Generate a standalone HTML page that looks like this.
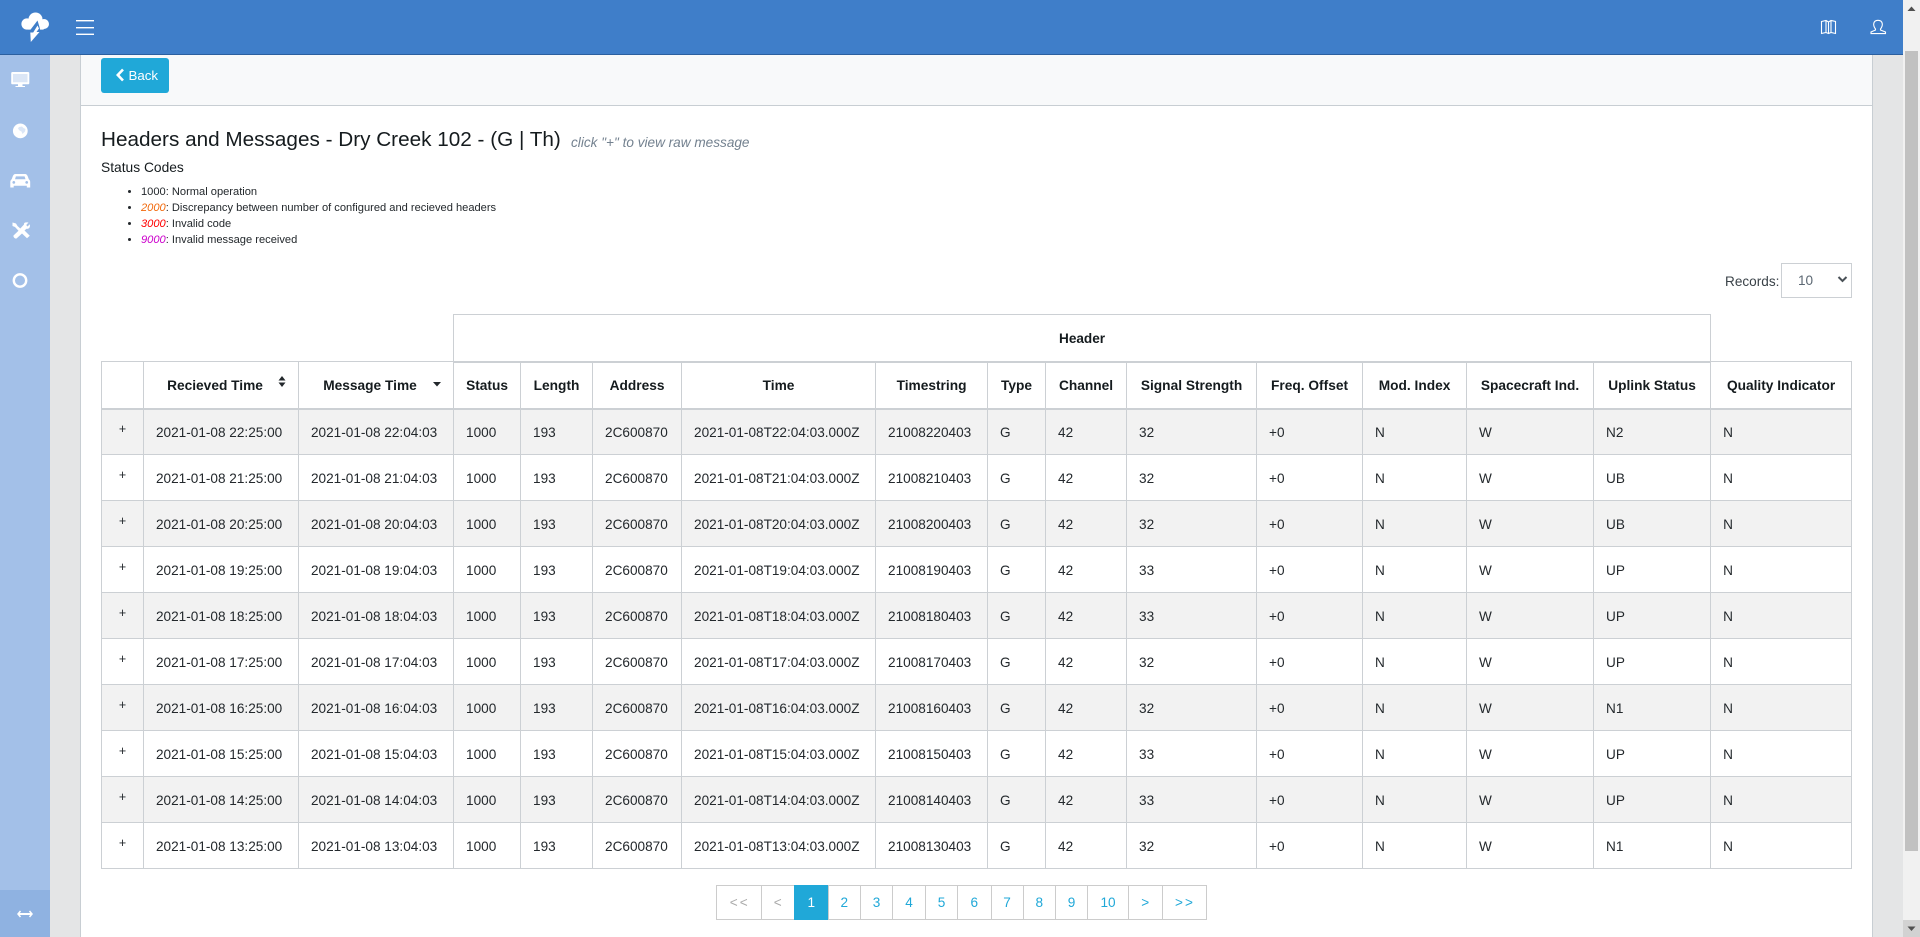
<!DOCTYPE html>
<html><head><meta charset="utf-8"><title>Headers and Messages</title>
<style>
*{box-sizing:border-box}
html,body{margin:0;padding:0;width:1920px;height:937px;overflow:hidden;background:#e4e5e6;font-family:"Liberation Sans",sans-serif;font-size:13.6px;color:#23282c}
.abs{position:absolute}
#top{left:0;top:0;width:1903px;height:55px;background:#3f7ec9;border-bottom:1px solid #2b5f9f}
#side{left:0;top:55px;width:50px;height:882px;background:#a3c0e8}
#sideb{left:0;top:890px;width:50px;height:47px;background:#8fb2e1}
#main{left:80px;top:55px;width:1793px;height:882px;background:#fff;border-left:1px solid #c8ced3;border-right:1px solid #c8ced3}
#phead{left:81px;top:55px;width:1791px;height:51px;background:#f8f9fa;border-bottom:1px solid #c8ced3}
#back{left:101px;top:58px;width:68px;height:35px;background:#20a8d8;border-radius:3px;color:#fff;line-height:35px;font-size:13.3px;padding-left:27.5px}
#title{left:101px;top:127px;font-size:20.72px;line-height:26px;color:#151b1e;white-space:nowrap}
#hint{left:571px;top:134px;font-size:13.6px;line-height:18px;font-style:italic;color:#73818f;white-space:nowrap}
#codes{left:101px;top:159px;font-size:13.8px;line-height:17px;color:#151b1e;white-space:nowrap}
#list{left:101px;top:184px;margin:0;padding:0 0 0 40px;font-size:11.12px;line-height:16px;white-space:nowrap}
#list i{font-style:italic}
#rec{left:1725px;top:272.5px;font-size:13.6px;line-height:18px;color:#3a4248}
#sel{left:1781px;top:263px;width:71px;height:35px;border:1px solid #ccd0d4;background:#fff;line-height:33px;padding-left:16px;color:#5c6873}
table{position:absolute;left:101px;top:314px;border-collapse:collapse;table-layout:fixed;width:1750px;background:transparent}
th,td{border:1px solid #ccd0d4;padding:0;font-size:13.6px;white-space:nowrap}
th{font-weight:bold;text-align:center;color:#151b1e;font-size:13.72px}
td{padding:1px 0 0 12px}
tr.t1{height:47px}tr.t2{height:47px}
tr.d{height:46px}
.t2 th{border-bottom-width:2px;padding-top:1px}
.t1 .h{border-bottom-width:2px;font-size:13.6px;padding-top:2px}
.t1 .n{border:0;border-bottom:1px solid #ccd0d4}
tbody tr:nth-child(odd){background:#f2f2f2}
td.p{padding:0 0 6px;text-align:center;font-size:12.5px}
th.s{padding-right:12px}
#pg{left:716px;top:885px;height:35px;display:flex}
#pg a{display:block;height:35px;line-height:34px;border:1px solid #ccc;margin-left:-1px;text-align:center;color:#20a8d8;background:#fff;font-size:13.6px}
#pg a.dis{color:#aaa}
#pg a.ls{letter-spacing:2px;padding-left:2px}
#pg a.on{background:#20a8d8;color:#fff;border-color:#20a8d8}
#sb{left:1903px;top:0;width:17px;height:937px;background:#f1f1f1}
#thumb{left:1905px;top:51px;width:13px;height:800px;background:#c1c1c1}
#sbb{left:1903px;top:920px;width:17px;height:17px;background:#d2d2d2}
</style></head><body>
<div class="abs" id="side"></div>
<div class="abs" id="sideb"></div>
<div class="abs" id="main"></div>
<div class="abs" id="phead"></div>
<div class="abs" id="top"></div>

<svg class="abs" style="left:0;top:0" width="100" height="55" viewBox="0 0 100 55">
<g fill="#fff"><circle cx="27" cy="24" r="5.6"/><circle cx="35.5" cy="19.5" r="7"/><circle cx="44" cy="24" r="5"/><rect x="27" y="22" width="17" height="7.6" rx="1"/></g>
<path d="M37.5 20.5 L29.5 31 V34 H41 L39.5 27Z" fill="#3f7ec9"/>
<path d="M37.5 25.5 L33.2 32.5 L30.3 32.5 L30.8 42 L39.5 32 L36.5 32 L39 28.5Z" fill="#fff"/>
<g fill="#fff"><rect x="76" y="20" width="18" height="1.4"/><rect x="76" y="27" width="18" height="1.4"/><rect x="76" y="33.6" width="18" height="1.4"/></g>
</svg>

<svg class="abs" style="left:1815px;top:14px" width="80" height="26" viewBox="1815 14 80 26" fill="none" stroke="#fff" stroke-width="1.1">
<path d="M1821.5 21.5 L1826 20.5 L1828.5 22 L1831 20.5 L1835.5 21.5 V33.5 L1831 32.5 L1828.5 33.5 L1826 32.5 L1821.5 33.5Z M1826 20.5 V32.5 M1828.5 22 V33.5 M1831 20.5 V32.5"/>
<path d="M1875.5 29 C1874 27 1873.5 25.5 1873.7 23.8 C1874 21.5 1875.8 20.3 1878 20.3 C1880.3 20.3 1882 21.5 1882.3 23.8 C1882.5 25.5 1882 27 1880.5 29 V30 L1885.5 32 V33.6 H1871 V32 L1875.5 30Z"/>
</svg>

<svg class="abs" style="left:0;top:55px" width="50" height="882" viewBox="0 55 50 882">
<rect x="12.5" y="73.5" width="15.5" height="9.5" fill="#dbe6f6"/>
<circle cx="20.3" cy="130.8" r="6.5" fill="#dbe6f6"/>
<g fill="#fff">
<path fill-rule="evenodd" d="M12.5 72 H28 a1.3 1.3 0 0 1 1.3 1.3 V83 a1.3 1.3 0 0 1 -1.3 1.3 H22.5 V86 H25 V87 H15.5 V86 H18 V84.3 H12.5 a1.3 1.3 0 0 1 -1.3 -1.3 V73.3 a1.3 1.3 0 0 1 1.3 -1.3Z M13 74 V82.3 H27.5 V74Z"/>
<path fill-rule="evenodd" d="M20.3 123.5 a7.4 7.4 0 1 0 0.01 0Z M19 127 L22 126.5 L23.5 128 L25.5 129 L25 131.5 L22.5 134 L21.5 131.5 L19.5 130.5 L18 128.5Z"/>
<path fill-rule="evenodd" d="M15.5 174 H25 C26.5 174 27.3 175 27.8 176.5 L28.8 179.3 C29.8 180 30.2 181 30.2 182 V187.5 H26.8 V185.7 H13.7 V187.5 H10.3 V182 C10.3 181 10.7 180 11.7 179.3 L12.7 176.5 C13.2 175 14 174 15.5 174Z M15.9 176.4 L15 179.2 H25.5 L24.6 176.4Z M13.8 181 a1.4 1.4 0 1 0 0.01 0Z M26.7 181 a1.4 1.4 0 1 0 0.01 0Z"/>
<path d="M12.5 222.5 L16 223.5 L17.5 226 L20.3 228.5 L24 224.5 C23.7 222.5 25.5 222 28.5 222.5 L26.2 225 L27.5 226.5 L29.8 224.2 C30.3 227 29.5 229 26.5 228.8 L24.5 230.5 L29.8 235.8 L27 238.3 L22 233.5 L16.5 238.5 C15 239 13 237 13.5 235.5 L18.5 230.7 L15 227 L12.5 226Z"/>
</g>
<circle cx="20" cy="280.5" r="6.2" fill="none" stroke="#fff" stroke-width="2.4"/>
<path d="M19 914 H31" fill="none" stroke="#fff" stroke-width="2"/>
<path d="M20.5 911 L18 914 L20.5 917 M29.5 911 L32 914 L29.5 917" fill="none" stroke="#fff" stroke-width="1.5"/>
</svg>

<div class="abs" id="back"><svg class="abs" style="left:14px;top:10px" width="10" height="14" viewBox="0 0 10 14"><path d="M8 1.5 L2.8 7 L8 12.5" fill="none" stroke="#fff" stroke-width="2.6"/></svg>Back</div>

<div class="abs" id="title">Headers and Messages - Dry Creek 102 - (G | Th)</div>
<div class="abs" id="hint">click "+" to view raw message</div>
<div class="abs" id="codes">Status Codes</div>
<ul class="abs" id="list">
<li>1000: Normal operation</li>
<li><i style="color:#f26a0d">2000</i>: Discrepancy between number of configured and recieved headers</li>
<li><i style="color:#f00">3000</i>: Invalid code</li>
<li><i style="color:#c0c">9000</i>: Invalid message received</li>
</ul>

<div class="abs" id="rec">Records:</div>
<div class="abs" id="sel">10<svg class="abs" style="left:55px;top:11px" width="11" height="9" viewBox="0 0 11 9"><path d="M1.5 2 L5.5 6 L9.5 2" fill="none" stroke="#4a5157" stroke-width="2"/></svg></div>

<table>
<colgroup><col style="width:42px"><col style="width:155px"><col style="width:155px"><col style="width:67px"><col style="width:72px"><col style="width:89px"><col style="width:194px"><col style="width:112px"><col style="width:58px"><col style="width:81px"><col style="width:130px"><col style="width:106px"><col style="width:104px"><col style="width:127px"><col style="width:117px"><col style="width:141px"></colgroup>
<thead>
<tr class="t1"><th class="n" colspan="3"></th><th class="h" colspan="12">Header</th><th class="n"></th></tr>
<tr class="t2"><th></th><th class="s">Recieved Time</th><th class="s">Message Time</th><th>Status</th><th>Length</th><th>Address</th><th>Time</th><th>Timestring</th><th>Type</th><th>Channel</th><th>Signal Strength</th><th>Freq. Offset</th><th>Mod. Index</th><th>Spacecraft Ind.</th><th>Uplink Status</th><th>Quality Indicator</th></tr>
</thead>
<tbody>
<tr class="d"><td class="p">+</td><td>2021-01-08 22:25:00</td><td>2021-01-08 22:04:03</td><td>1000</td><td>193</td><td>2C600870</td><td>2021-01-08T22:04:03.000Z</td><td>21008220403</td><td>G</td><td>42</td><td>32</td><td>+0</td><td>N</td><td>W</td><td>N2</td><td>N</td></tr>
<tr class="d"><td class="p">+</td><td>2021-01-08 21:25:00</td><td>2021-01-08 21:04:03</td><td>1000</td><td>193</td><td>2C600870</td><td>2021-01-08T21:04:03.000Z</td><td>21008210403</td><td>G</td><td>42</td><td>32</td><td>+0</td><td>N</td><td>W</td><td>UB</td><td>N</td></tr>
<tr class="d"><td class="p">+</td><td>2021-01-08 20:25:00</td><td>2021-01-08 20:04:03</td><td>1000</td><td>193</td><td>2C600870</td><td>2021-01-08T20:04:03.000Z</td><td>21008200403</td><td>G</td><td>42</td><td>32</td><td>+0</td><td>N</td><td>W</td><td>UB</td><td>N</td></tr>
<tr class="d"><td class="p">+</td><td>2021-01-08 19:25:00</td><td>2021-01-08 19:04:03</td><td>1000</td><td>193</td><td>2C600870</td><td>2021-01-08T19:04:03.000Z</td><td>21008190403</td><td>G</td><td>42</td><td>33</td><td>+0</td><td>N</td><td>W</td><td>UP</td><td>N</td></tr>
<tr class="d"><td class="p">+</td><td>2021-01-08 18:25:00</td><td>2021-01-08 18:04:03</td><td>1000</td><td>193</td><td>2C600870</td><td>2021-01-08T18:04:03.000Z</td><td>21008180403</td><td>G</td><td>42</td><td>33</td><td>+0</td><td>N</td><td>W</td><td>UP</td><td>N</td></tr>
<tr class="d"><td class="p">+</td><td>2021-01-08 17:25:00</td><td>2021-01-08 17:04:03</td><td>1000</td><td>193</td><td>2C600870</td><td>2021-01-08T17:04:03.000Z</td><td>21008170403</td><td>G</td><td>42</td><td>32</td><td>+0</td><td>N</td><td>W</td><td>UP</td><td>N</td></tr>
<tr class="d"><td class="p">+</td><td>2021-01-08 16:25:00</td><td>2021-01-08 16:04:03</td><td>1000</td><td>193</td><td>2C600870</td><td>2021-01-08T16:04:03.000Z</td><td>21008160403</td><td>G</td><td>42</td><td>32</td><td>+0</td><td>N</td><td>W</td><td>N1</td><td>N</td></tr>
<tr class="d"><td class="p">+</td><td>2021-01-08 15:25:00</td><td>2021-01-08 15:04:03</td><td>1000</td><td>193</td><td>2C600870</td><td>2021-01-08T15:04:03.000Z</td><td>21008150403</td><td>G</td><td>42</td><td>33</td><td>+0</td><td>N</td><td>W</td><td>UP</td><td>N</td></tr>
<tr class="d"><td class="p">+</td><td>2021-01-08 14:25:00</td><td>2021-01-08 14:04:03</td><td>1000</td><td>193</td><td>2C600870</td><td>2021-01-08T14:04:03.000Z</td><td>21008140403</td><td>G</td><td>42</td><td>33</td><td>+0</td><td>N</td><td>W</td><td>UP</td><td>N</td></tr>
<tr class="d"><td class="p">+</td><td>2021-01-08 13:25:00</td><td>2021-01-08 13:04:03</td><td>1000</td><td>193</td><td>2C600870</td><td>2021-01-08T13:04:03.000Z</td><td>21008130403</td><td>G</td><td>42</td><td>32</td><td>+0</td><td>N</td><td>W</td><td>N1</td><td>N</td></tr>
</tbody>
</table>

<svg class="abs" style="left:270px;top:370px" width="180" height="24" viewBox="270 370 180 24"><g fill="#23282c"><path d="M278.5 380.5 L282 376 L285.5 380.5Z M278.5 382.5 L285.5 382.5 L282 387Z M433 382 H441 L437 386.5Z"/></g></svg>

<div class="abs" id="pg">
<a class="dis ls" style="width:45.5px;margin-left:0">&lt;&lt;</a><a class="dis" style="width:34.5px">&lt;</a><a class="on" style="width:34.5px">1</a><a style="width:33.5px">2</a><a style="width:33px">3</a><a style="width:34px">4</a><a style="width:33px">5</a><a style="width:34.5px">6</a><a style="width:33px">7</a><a style="width:33.5px">8</a><a style="width:33px">9</a><a style="width:42px">10</a><a style="width:34.5px">&gt;</a><a class="ls" style="width:45px">&gt;&gt;</a>
</div>

<div class="abs" id="sb"></div>
<div class="abs" id="thumb"></div>
<div class="abs" id="sbb"></div>
<svg class="abs" style="left:1903px;top:0" width="17" height="17" viewBox="0 0 17 17"><path d="M4.5 11 L8.5 6.5 L12.5 11Z" fill="#505050"/></svg>
<svg class="abs" style="left:1903px;top:920px" width="17" height="17" viewBox="0 0 17 17"><path d="M4.5 6.5 H12.5 L8.5 11Z" fill="#505050"/></svg>
</body></html>
